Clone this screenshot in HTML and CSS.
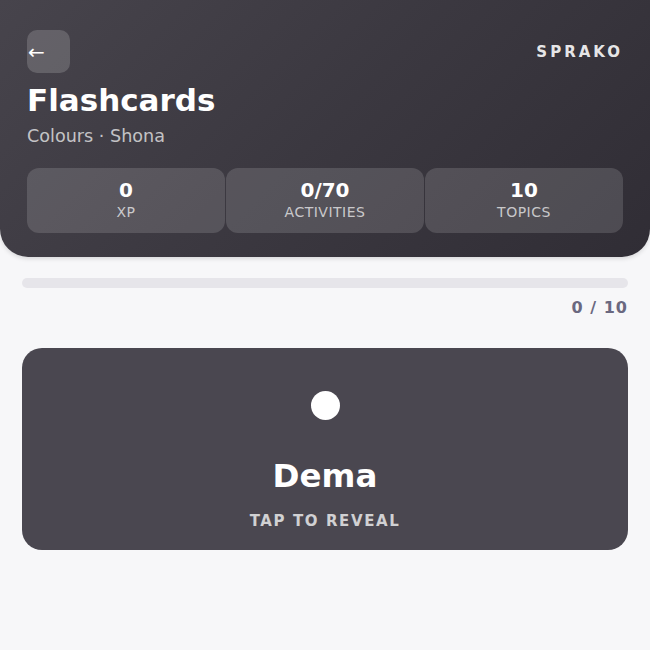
FILE: index.html
```html
<!DOCTYPE html>
<html lang="en">
<head>
    <meta charset="UTF-8">
    <meta name="viewport" content="width=device-width, initial-scale=1.0">
    <title>Flashcards - Sprako</title>
    <link rel="stylesheet" href="styles.css">
</head>
<body>

<header class="hero">
    <div class="top-row">
        <button class="back-btn">&larr;</button>
        <div class="brand">SPRAKO</div>
    </div>
    <h1>Flashcards</h1>
    <div class="subtitle">Colours &middot; Shona</div>
    <div class="stats">
        <div class="stat">
            <div class="stat-value">0</div>
            <div class="stat-label">XP</div>
        </div>
        <div class="stat">
            <div class="stat-value">0/70</div>
            <div class="stat-label">Activities</div>
        </div>
        <div class="stat">
            <div class="stat-value">10</div>
            <div class="stat-label">Topics</div>
        </div>
    </div>
</header>

<main class="content">
    <div class="progress">
        <div class="progress-fill" style="width: 0%;"></div>
    </div>
    <div class="progress-text">0 / 10</div>

    <div class="card">
        <div class="swatch"></div>
        <div class="word">Dema</div>
        <div class="hint">Tap to reveal</div>
    </div>
</main>

</body>
</html>
```

FILE: styles.css
```css
body {
    font-family: 'DejaVu Sans', sans-serif;
    margin: 0;
    background: #f7f7f9;
    color: #333;
}
.hero {
    background: linear-gradient(135deg, #47444c 0%, #3b3840 50%, #302d35 100%);
    border-radius: 0 0 28px 28px;
    padding: 30px 27px 24px 27px;
    color: white;
    box-shadow: 0 2px 4px rgba(0, 0, 0, 0.12);
}
.top-row {
    display: flex;
    justify-content: space-between;
    align-items: center;
}
.back-btn {
    width: 43px;
    height: 43px;
    border: none;
    border-radius: 10px;
    background: rgba(255, 255, 255, 0.17);
    color: white;
    font-family: 'DejaVu Sans', sans-serif;
    font-size: 20px;
    text-align: left;
    padding: 0 0 0 1px;
}
.brand {
    font-size: 15px;
    font-weight: bold;
    letter-spacing: 3px;
    color: rgba(255, 255, 255, 0.9);
}
h1 {
    margin: 8px 0 0 0;
    font-size: 31px;
    line-height: 38px;
}
.subtitle {
    margin-top: 7px;
    font-size: 17.6px;
    color: rgba(255, 255, 255, 0.7);
}
.stats {
    display: flex;
    gap: 1px;
    margin-top: 22px;
}
.stat {
    flex: 1;
    background: rgba(255, 255, 255, 0.14);
    border-radius: 12px;
    text-align: center;
    padding: 9px 0 11px 0;
}
.stat-value {
    font-size: 20px;
    font-weight: bold;
    line-height: 26px;
}
.stat-label {
    font-size: 14px;
    text-transform: uppercase;
    letter-spacing: 0.5px;
    color: rgba(255, 255, 255, 0.7);
    line-height: 19px;
}
.content {
    padding: 21px 22px;
}
.progress {
    height: 10px;
    background: #e6e5ea;
    border-radius: 5px;
    overflow: hidden;
}
.progress-fill {
    height: 100%;
    background: #6b6880;
}
.progress-text {
    text-align: right;
    margin-top: 10px;
    font-size: 16px;
    font-weight: bold;
    letter-spacing: 1px;
    color: #6a6880;
}
.card {
    margin-top: 31px;
    background: #4a4750;
    border-radius: 20px;
    height: 202px;
    display: flex;
    flex-direction: column;
    align-items: center;
    color: white;
}
.swatch {
    width: 29px;
    height: 29px;
    border-radius: 50%;
    background: white;
    margin-top: 43px;
}
.word {
    margin-top: 36px;
    font-size: 32.5px;
    font-weight: bold;
    line-height: 40px;
}
.hint {
    margin-top: 16px;
    font-size: 15px;
    font-weight: bold;
    text-transform: uppercase;
    letter-spacing: 1.6px;
    color: rgba(255, 255, 255, 0.75);
}
```
